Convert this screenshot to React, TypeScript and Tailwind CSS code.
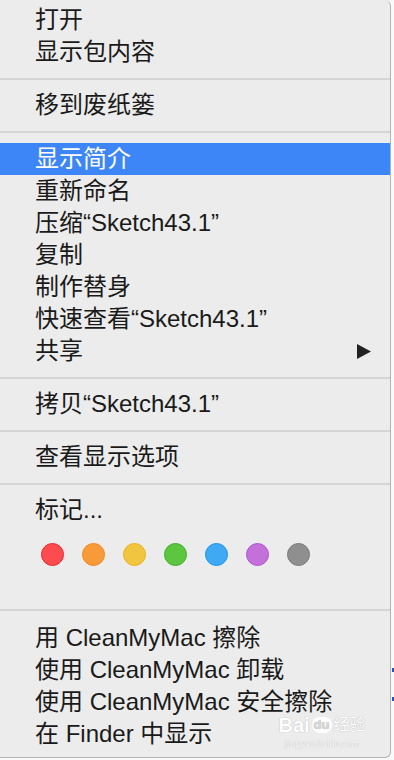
import React from "react";

const font = {
  fontFamily: '"Liberation Sans", "Noto Sans CJK SC", sans-serif',
};

type Item = { label: string; active?: boolean; submenu?: boolean };

const groups: Item[][] = [
  [{ label: "打开" }, { label: "显示包内容" }],
  [{ label: "移到废纸篓" }],
  [
    { label: "显示简介", active: true },
    { label: "重新命名" },
    { label: "压缩“Sketch43.1”" },
    { label: "复制" },
    { label: "制作替身" },
    { label: "快速查看“Sketch43.1”" },
    { label: "共享", submenu: true },
  ],
  [{ label: "拷贝“Sketch43.1”" }],
  [{ label: "查看显示选项" }],
];

const tags = [
  { fill: "bg-[#fd4b4f]", ring: "border-[#e8272c]" },
  { fill: "bg-[#f79a3a]", ring: "border-[#f0891f]" },
  { fill: "bg-[#f2c540]", ring: "border-[#eab31a]" },
  { fill: "bg-[#5cc641]", ring: "border-[#3eb02a]" },
  { fill: "bg-[#40a9f3]", ring: "border-[#1c94ec]" },
  { fill: "bg-[#c470db]", ring: "border-[#b054d0]" },
  { fill: "bg-[#8f8f8f]", ring: "border-[#7b7b7b]" },
];

const MenuRow = ({ item }: { item: Item }) => (
  <div
    className={`flex h-[32px] items-center justify-between pl-[35px] pr-[19px] text-[24px] leading-[32px] whitespace-nowrap ${
      item.active ? "bg-[#3d86f8] text-white" : "text-[#1a1a1a]"
    }`}
  >
    <span>{item.label}</span>
    {item.submenu && (
      <svg width="14" height="15" viewBox="0 0 14 15">
        <polygon points="0,0 14,7.5 0,15" fill="#222" />
      </svg>
    )}
  </div>
);

const Separator = ({ top = 10, bottom = 9 }: { top?: number; bottom?: number }) => (
  <div style={{ marginTop: top, marginBottom: bottom }} className="h-[2px] bg-[#d5d5d5]" />
);

export default function App() {
  return (
    <div className="relative h-[760px] w-[394px] overflow-hidden bg-[#fafafa]" style={font}>
      <div className="relative w-[391px] rounded-tr-[6px] rounded-br-[6px] border-r border-b border-[#b3b3b3] bg-[#ececec] pt-[4px] pb-[7px]">
        {groups.map((g, gi) => (
          <React.Fragment key={gi}>
            {gi === 1 ? <Separator top={10} bottom={9} /> : null}
            {gi === 2 ? <Separator top={10} bottom={10} /> : null}
            {gi >= 3 ? <Separator top={10} bottom={9} /> : null}
            {g.map((item) => (
              <MenuRow key={item.label} item={item} />
            ))}
          </React.Fragment>
        ))}
        <Separator top={10} bottom={9} />
        <MenuRow item={{ label: "标记..." }} />

        {/* colour tags */}
        <div className="mt-[17px] flex gap-[18px] pl-[41px]">
          {tags.map((t, i) => (
            <div
              key={i}
              className={`h-[23px] w-[23px] rounded-full border ${t.fill} ${t.ring}`}
            />
          ))}
        </div>

        <Separator top={43} bottom={11} />
        <MenuRow item={{ label: "用 CleanMyMac 擦除" }} />
        <MenuRow item={{ label: "使用 CleanMyMac 卸载" }} />
        <MenuRow item={{ label: "使用 CleanMyMac 安全擦除" }} />
        <MenuRow item={{ label: "在 Finder 中显示" }} />

        {/* watermark */}
        <div className="pointer-events-none absolute bottom-[8px] left-[278px] flex w-[88px] flex-col items-center gap-[2px] text-white [text-shadow:0_0_1px_#a0a0a0]">
          <div className="flex items-center gap-[2px] leading-[22px]">
            <span className="text-[20px] font-bold">Bai</span>
            <span className="rounded-full bg-white px-[2px] text-[13px] font-bold leading-[16px] text-[#d8d8d8]">du</span>
            <span className="text-[16px]">经验</span>
          </div>
          <div className="text-[10px] leading-[11px]" style={{ fontFamily: '"Liberation Serif", serif' }}>
            jingyan.baidu.com
          </div>
        </div>
      </div>

      {/* background specks to the right of the menu */}
      <div className="absolute left-[392px] top-[668px] h-[4px] w-[2px] bg-[#1f4fd8]" />
      <div className="absolute left-[392px] top-[697px] h-[4px] w-[2px] bg-[#1f4fd8]" />
    </div>
  );
}
